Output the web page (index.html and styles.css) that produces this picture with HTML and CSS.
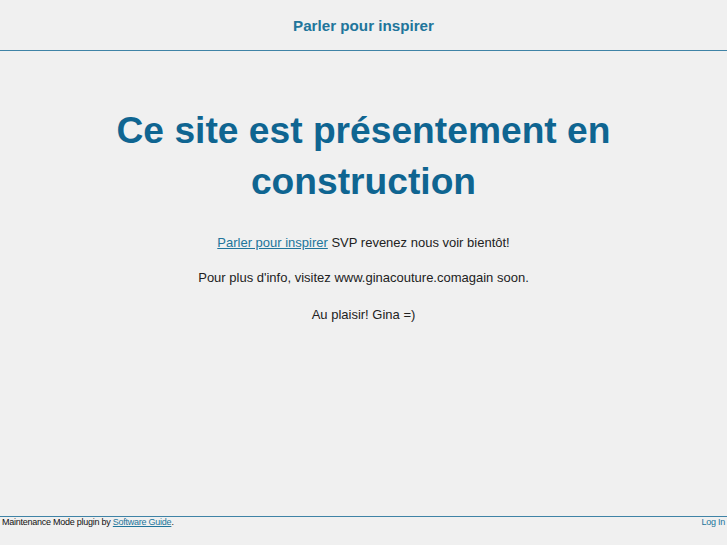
FILE: index.html
```html
<!DOCTYPE html>
<html lang="fr">
<head>
<meta charset="utf-8">
<title>Parler pour inspirer</title>
<link rel="stylesheet" href="styles.css">
</head>
<body>
<div class="page">
  <header class="site-header">
    <a class="site-title" href="#">Parler pour inspirer</a>
  </header>
  <main class="content">
    <h1 class="headline">Ce site est présentement en construction</h1>
    <p class="msg"><a href="#">Parler pour inspirer</a> SVP revenez nous voir bientôt!</p>
    <p class="msg">Pour plus d'info, visitez www.ginacouture.comagain soon.</p>
    <p class="msg last">Au plaisir! Gina =)</p>
  </main>
  <footer class="site-footer">
    <span class="credit">Maintenance Mode plugin by <a href="#">Software Guide</a>.</span>
    <a class="login" href="#">Log In</a>
  </footer>
</div>
</body>
</html>
```
FILE: styles.css
```css
html, body {
  margin: 0;
  padding: 0;
  height: 100%;
  background: #f0f0f0;
}
body {
  font-family: "Liberation Sans", Arial, sans-serif;
  color: #222;
}
.page {
  display: flex;
  flex-direction: column;
  min-height: 100%;
}
.site-header {
  height: 50px;
  border-bottom: 1px solid #3f83a6;
  display: flex;
  align-items: center;
  justify-content: center;
}
.site-title {
  color: #21759b;
  font-weight: bold;
  font-size: 15.2px;
  text-decoration: none;
}
.content {
  flex: 1;
  text-align: center;
  padding-top: 54px;
}
.headline {
  margin: 0 auto;
  width: 540px;
  font-size: 37.2px;
  line-height: 51px;
  color: #0f6591;
}
.msg {
  margin: 0;
  font-size: 13px;
  line-height: 16px;
}
.headline + .msg { margin-top: 28px; }
.msg + .msg { margin-top: 19px; }
.msg + .msg.last { margin-top: 21px; }
.msg a { color: #21759b; }
.site-footer {
  border-top: 1px solid #3f83a6;
  display: flex;
  justify-content: space-between;
  padding: 0 2px;
  height: 28px;
  font-size: 9px;
  line-height: 11px;
  letter-spacing: -0.25px;
}
.credit { color: #111; }
.credit a { color: #21759b; }
.login { color: #21759b; text-decoration: none; }
```
